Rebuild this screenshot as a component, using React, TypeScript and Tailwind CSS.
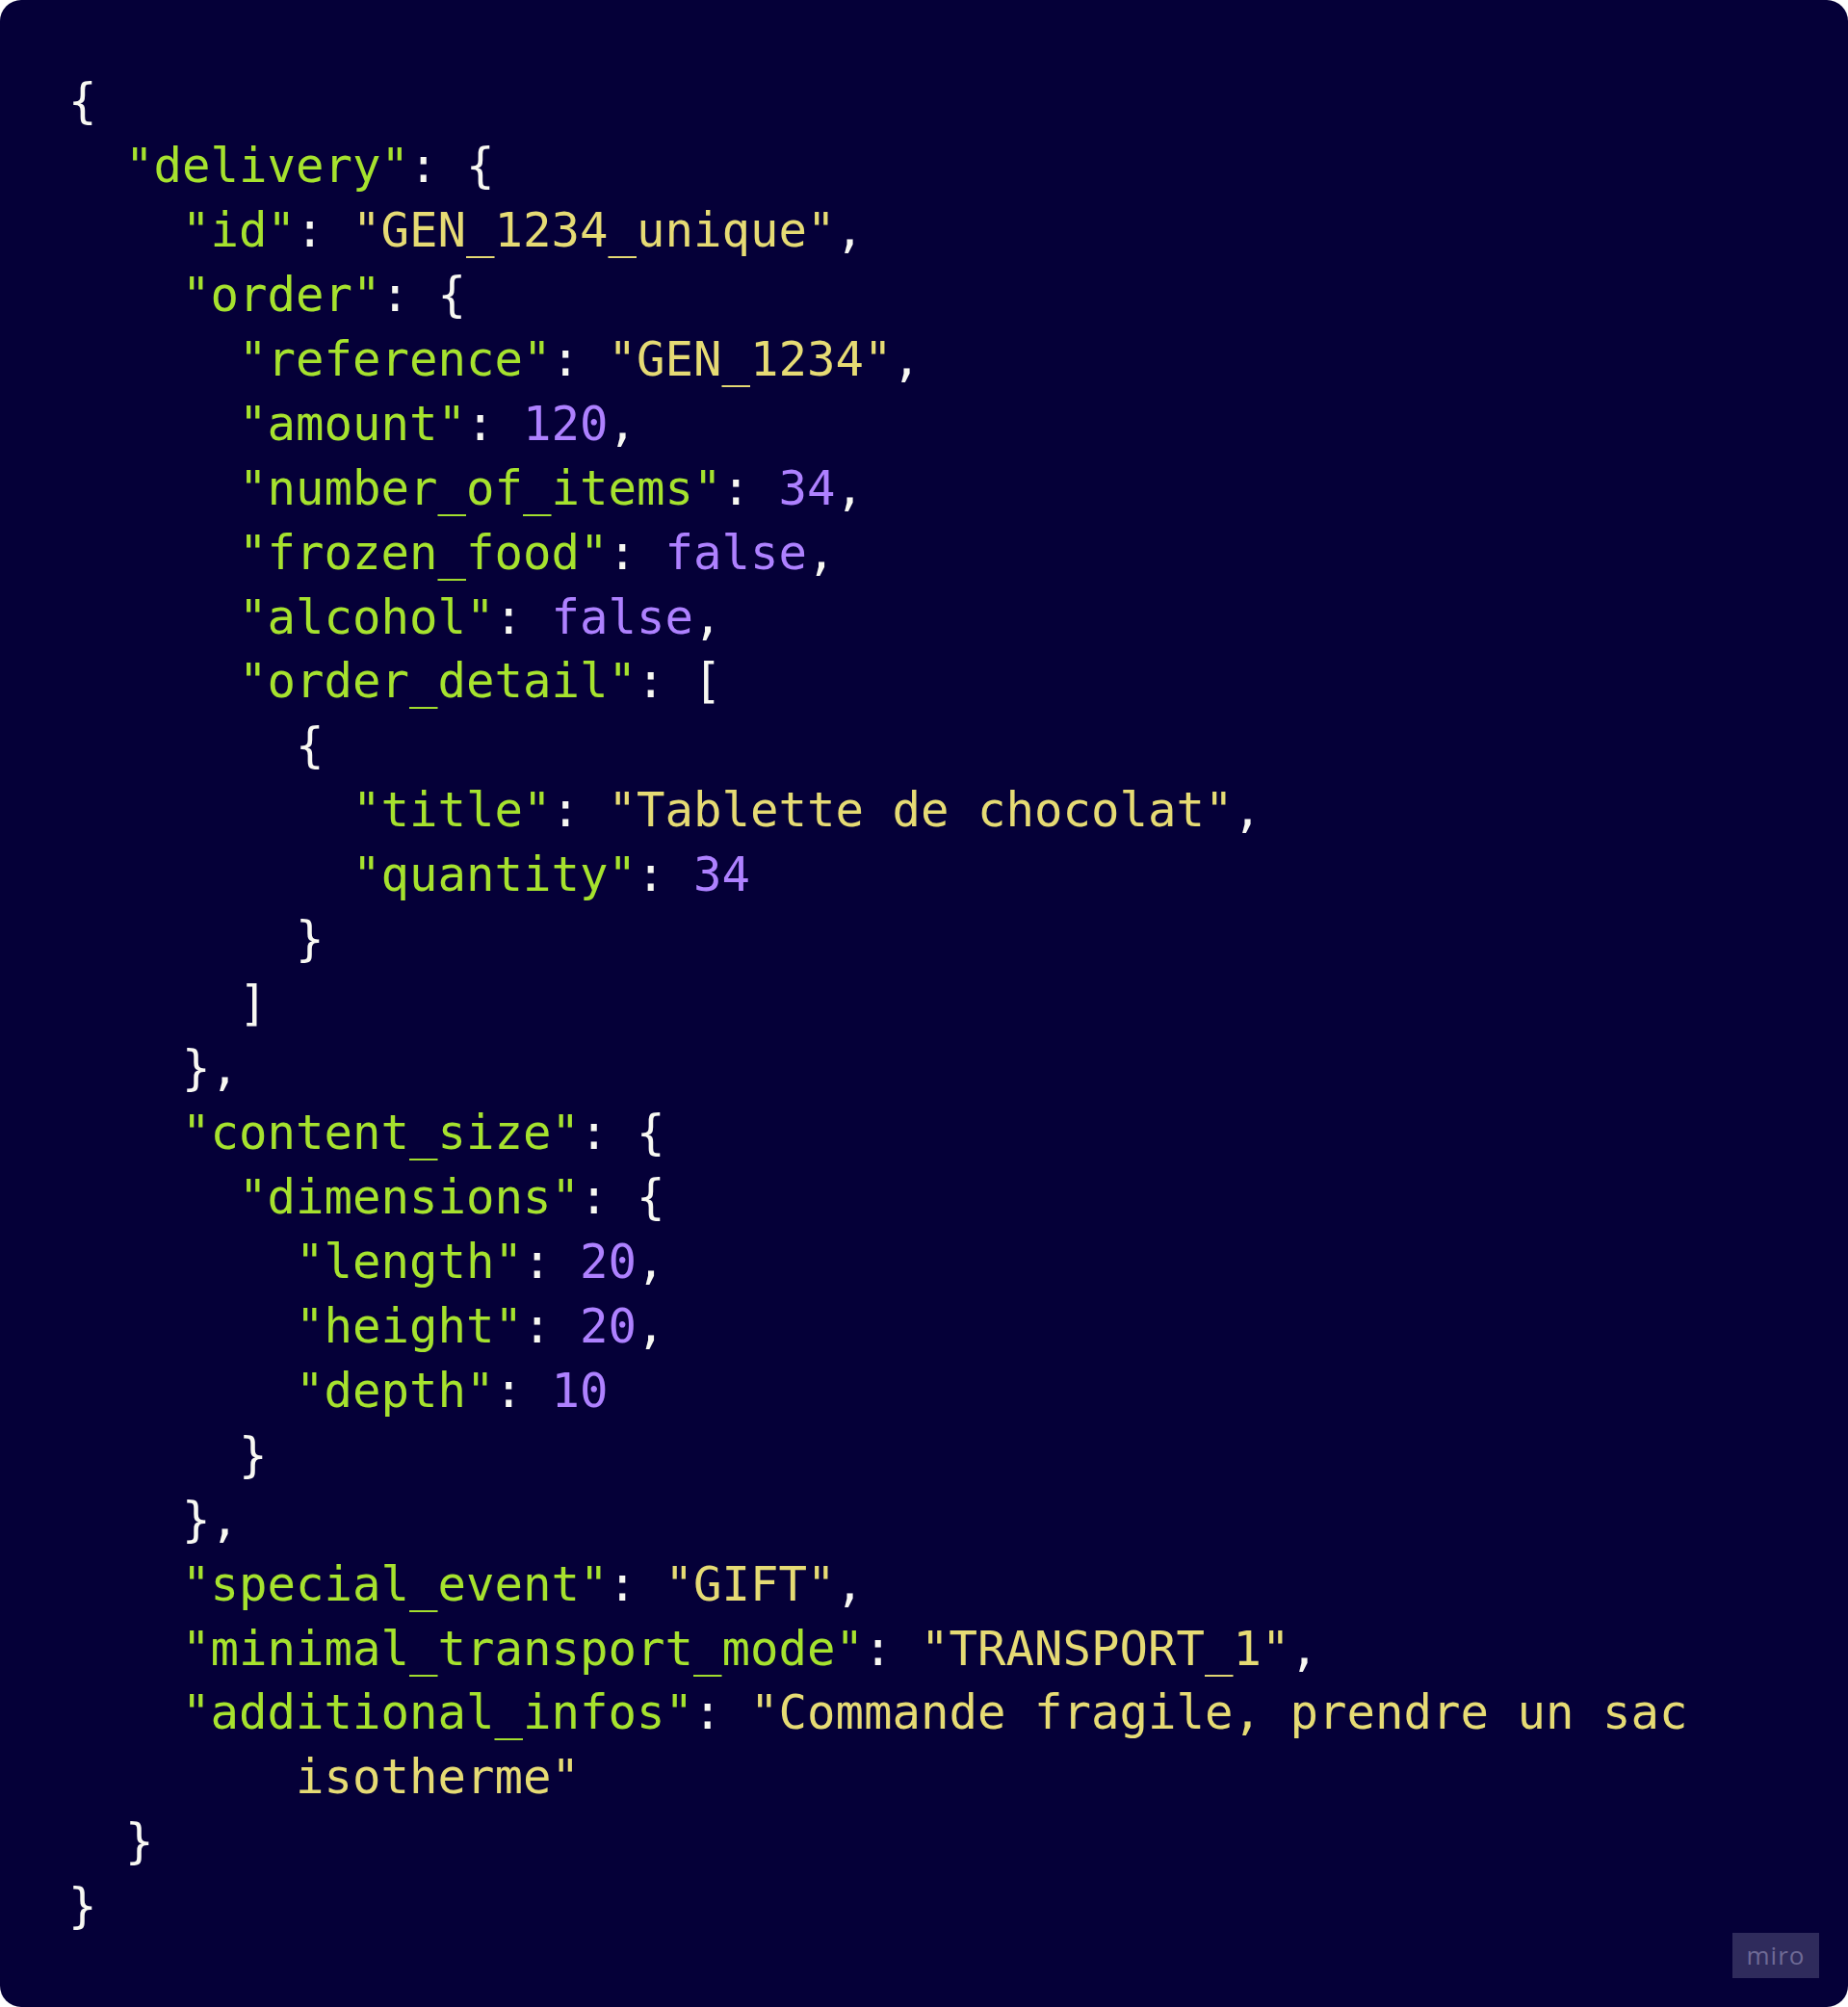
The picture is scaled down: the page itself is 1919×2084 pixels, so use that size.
import React from "react";

type Seg = [string, "k" | "s" | "n" | "p"];

const cls: Record<Seg[1], string> = {
  k: "text-[#a6e22e]",
  s: "text-[#e6db74]",
  n: "text-[#ae81ff]",
  p: "text-[#f8f8f2]",
};

const lines: Seg[][] = [
  [["{", "p"]],
  [["  ", "p"], ['"delivery"', "k"], [": {", "p"]],
  [["    ", "p"], ['"id"', "k"], [": ", "p"], ['"GEN_1234_unique"', "s"], [",", "p"]],
  [["    ", "p"], ['"order"', "k"], [": {", "p"]],
  [["      ", "p"], ['"reference"', "k"], [": ", "p"], ['"GEN_1234"', "s"], [",", "p"]],
  [["      ", "p"], ['"amount"', "k"], [": ", "p"], ["120", "n"], [",", "p"]],
  [["      ", "p"], ['"number_of_items"', "k"], [": ", "p"], ["34", "n"], [",", "p"]],
  [["      ", "p"], ['"frozen_food"', "k"], [": ", "p"], ["false", "n"], [",", "p"]],
  [["      ", "p"], ['"alcohol"', "k"], [": ", "p"], ["false", "n"], [",", "p"]],
  [["      ", "p"], ['"order_detail"', "k"], [": [", "p"]],
  [["        {", "p"]],
  [["          ", "p"], ['"title"', "k"], [": ", "p"], ['"Tablette de chocolat"', "s"], [",", "p"]],
  [["          ", "p"], ['"quantity"', "k"], [": ", "p"], ["34", "n"]],
  [["        }", "p"]],
  [["      ]", "p"]],
  [["    },", "p"]],
  [["    ", "p"], ['"content_size"', "k"], [": {", "p"]],
  [["      ", "p"], ['"dimensions"', "k"], [": {", "p"]],
  [["        ", "p"], ['"length"', "k"], [": ", "p"], ["20", "n"], [",", "p"]],
  [["        ", "p"], ['"height"', "k"], [": ", "p"], ["20", "n"], [",", "p"]],
  [["        ", "p"], ['"depth"', "k"], [": ", "p"], ["10", "n"]],
  [["      }", "p"]],
  [["    },", "p"]],
  [["    ", "p"], ['"special_event"', "k"], [": ", "p"], ['"GIFT"', "s"], [",", "p"]],
  [["    ", "p"], ['"minimal_transport_mode"', "k"], [": ", "p"], ['"TRANSPORT_1"', "s"], [",", "p"]],
  [["    ", "p"], ['"additional_infos"', "k"], [": ", "p"], ['"Commande fragile, prendre un sac', "s"]],
  [["        ", "p"], ['isotherme"', "s"]],
  [["  }", "p"]],
  [["}", "p"]],
];

export default function App() {
  return (
    <div className="w-[1919px] h-[2084px] bg-white">
      <div className="relative h-full w-full rounded-[22px] bg-[#050038] pt-[73px] pl-[71px]">
        <div
          className="text-[49px] leading-[66.93px] whitespace-pre"
          style={{ fontFamily: '"DejaVu Sans Mono", "Liberation Mono", monospace' }}
        >
          {lines.map((segs, i) => (
            <div key={i}>
              {segs.map((s, j) => (
                <span key={j} className={cls[s[1]]}>
                  {s[0]}
                </span>
              ))}
            </div>
          ))}
        </div>
        <div
          className="absolute right-[30px] bottom-[30px] flex h-[47px] w-[90px] items-center justify-center bg-[#2f2b5c] text-[26px] tracking-[1px] text-[#6e6a95]"
          style={{ fontFamily: '"Open Sans", "Noto Sans", sans-serif' }}
        >
          miro
        </div>
      </div>
    </div>
  );
}
